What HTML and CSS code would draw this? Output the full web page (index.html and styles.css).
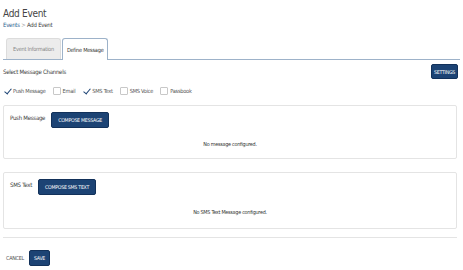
FILE: index.html
```html
<!DOCTYPE html>
<html lang="en">
<head>
  <meta charset="UTF-8" />
  <meta name="viewport" content="width=device-width, initial-scale=1" />
  <title>Add Event</title>
  <link rel="stylesheet" href="styles.css">
</head>
<body>

<div class="page">
  <h1 class="title">Add Event</h1>
  <div class="crumbs">
    <a href="#" class="crumb-link">Events</a>
    <span class="crumb-sep">&gt;</span>
    <span>Add Event</span>
  </div>

  <div class="tabs">
    <button class="tab">Event Information</button>
    <button class="tab active">Define Message</button>
  </div>

  <div class="channels-head">
    <span>Select Message Channels</span>
    <button class="btn btn-small">SETTINGS</button>
  </div>

  <div class="channels">
    <label class="channel"><span class="check checked"></span>Push Message</label>
    <label class="channel"><span class="check"></span>Email</label>
    <label class="channel"><span class="check checked"></span>SMS Text</label>
    <label class="channel"><span class="check"></span>SMS Voice</label>
    <label class="channel"><span class="check"></span>Passbook</label>
  </div>

  <div class="card">
    <div class="card-head">
      <span class="card-label">Push Message</span>
      <button class="btn">COMPOSE MESSAGE</button>
    </div>
    <div class="empty">No message configured.</div>
  </div>

  <div class="card card-sms">
    <div class="card-head">
      <span class="card-label">SMS Text</span>
      <button class="btn">COMPOSE SMS TEXT</button>
    </div>
    <div class="empty">No SMS Text Message configured.</div>
  </div>

  <div class="actions">
    <a href="#" class="cancel">CANCEL</a>
    <button class="btn btn-save">SAVE</button>
  </div>
</div>

</body>
</html>
```

FILE: styles.css
```css
:root {
  --navy: #1c4374;
  --text: #3a3a3a;
  --line: #e4e4e4;
  --tab-line: #9db2c9;
}

* {
  box-sizing: border-box;
}

body {
  margin: 0;
  font-family: "Liberation Sans Narrow", "DejaVu Sans Condensed", sans-serif;
  letter-spacing: -0.25px;
  color: var(--text);
  background: #fff;
}

.page {
  padding: 8px 3px 0 3px;
}

.title {
  margin: 0;
  font-size: 10px;
  font-weight: normal;
  line-height: 12px;
  letter-spacing: -0.3px;
  color: #444;
}

.crumbs {
  font-size: 6px;
  line-height: 8px;
  margin-top: 1px;
}

.crumb-link {
  color: #2a5d8f;
  text-decoration: none;
}

.crumb-sep {
  color: #999;
}

.tabs {
  display: flex;
  align-items: flex-end;
  gap: 1px;
  margin-top: 9px;
  padding-left: 3px;
  border-bottom: 1px solid var(--tab-line);
}

.tab {
  font-family: inherit;
  letter-spacing: inherit;
  font-size: 5.6px;
  height: 21px;
  padding: 0 6px;
  background: #ececec;
  color: #888;
  border: 1px solid #dcdcdc;
  border-bottom: none;
  border-radius: 3px 3px 0 0;
}

.tab.active {
  height: 22px;
  padding: 0 4px;
  background: #fff;
  color: #333;
  border-color: var(--tab-line);
  margin-bottom: -1px;
}

.channels-head {
  display: flex;
  justify-content: space-between;
  align-items: center;
  margin-top: 4px;
  font-size: 6px;
  padding-right: 2px;
}

.btn {
  font-family: inherit;
  letter-spacing: inherit;
  font-size: 5.2px;
  color: #fff;
  background: var(--navy);
  border: 1px solid #12315a;
  border-radius: 2px;
  height: 16px;
  padding: 0 6px;
}

.btn-small {
  height: 15px;
  padding: 0 2px;
}

.channels {
  display: flex;
  gap: 7px;
  margin-top: 8px;
  font-size: 5.6px;
  color: #555;
}

.channel {
  display: flex;
  align-items: center;
  gap: 2px;
}

.check {
  position: relative;
  width: 8px;
  height: 8px;
  border: 1px solid #c8c8c8;
  border-radius: 1px;
  background: #fff;
}

.check.checked {
  border-color: transparent;
}

.check.checked::after {
  content: "";
  position: absolute;
  left: 2px;
  top: -1px;
  width: 3px;
  height: 6px;
  border: solid var(--navy);
  border-width: 0 1.5px 1.5px 0;
  transform: rotate(40deg);
}

.card {
  margin-top: 10px;
  border: 1px solid var(--line);
  border-radius: 2px;
  height: 54px;
  padding: 6px 6px 0 6px;
  margin-right: 3px;
}

.card-sms {
  margin-top: 13px;
  height: 57px;
}

.card-head {
  display: flex;
  align-items: flex-start;
  gap: 6px;
  font-size: 6px;
}

.card-label {
  padding-top: 2px;
}

.empty {
  text-align: center;
  font-size: 5.4px;
  margin-top: 13px;
  color: #333;
}

.card-sms .empty {
  margin-top: 14px;
}

.actions {
  display: flex;
  align-items: center;
  gap: 5px;
  margin-top: 8px;
  margin-right: 3px;
  padding: 12px 0 0 3px;
  border-top: 1px solid var(--line);
}

.cancel {
  font-size: 5.4px;
  color: #555;
  text-decoration: none;
}

.btn-save {
  padding: 0 4px;
}
```
